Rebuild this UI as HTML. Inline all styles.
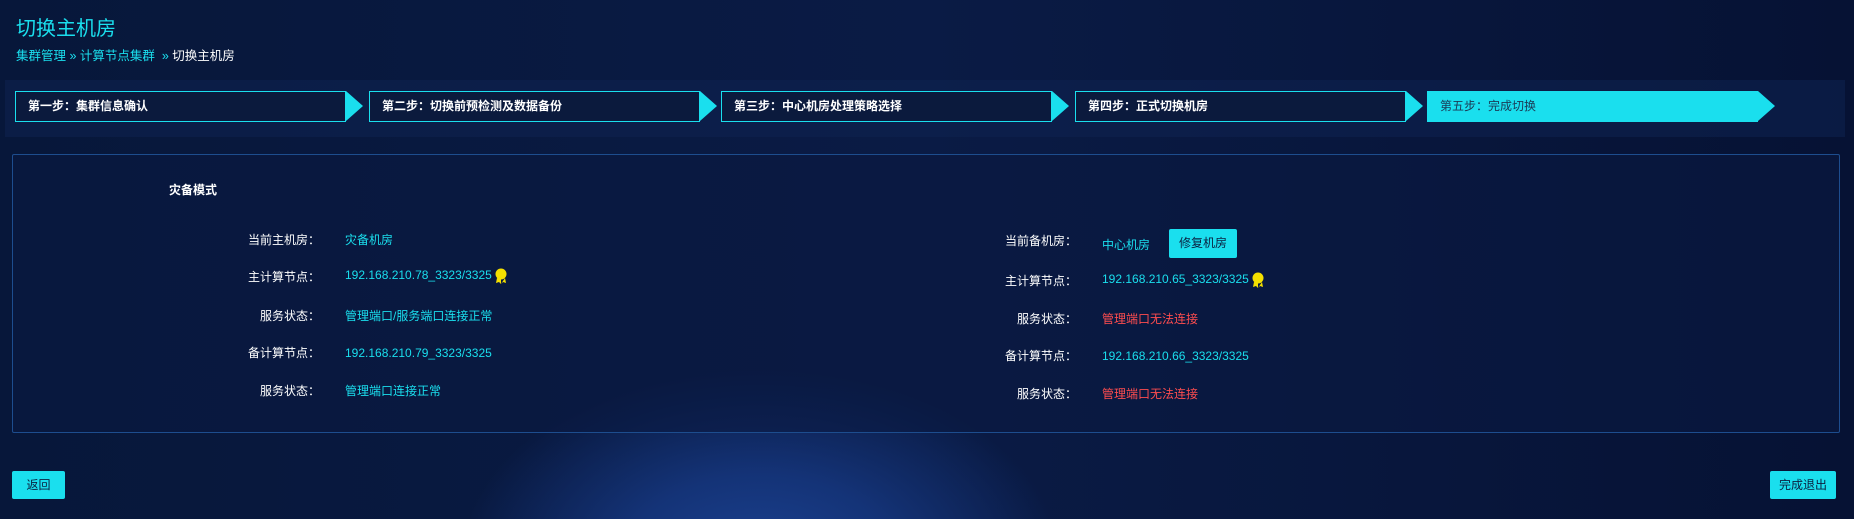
<!DOCTYPE html>
<html><head><meta charset="utf-8"><style>
*{margin:0;padding:0;box-sizing:border-box}
body{width:1854px;height:519px;overflow:hidden;position:relative;font-family:"Liberation Sans","Noto Sans CJK SC",sans-serif;font-size:12px;color:#fff;
background:radial-gradient(ellipse 300px 190px at 760px 560px,#1b4190 0%,#143377 45%,rgba(12,28,70,0) 100%),linear-gradient(90deg,#07173a 0%,#0a1b45 50%,#061234 100%);}
.a{position:absolute}
.title{left:16px;top:12px;font-size:20px;color:#1adfee}
.bc{left:16px;top:45px;font-size:12.5px;color:#1adfee}
.bc span{color:#fff}
.bar{left:5px;top:80px;width:1840px;height:57px;background:rgba(15,35,80,.55)}
.step{top:91px;height:31px;width:331px;border:1px solid #1adfee;background:#0b1a3d;font-weight:bold;font-size:12px;line-height:29px;padding-left:12px}
.arr{top:91px;width:0;height:0;border-top:15.5px solid transparent;border-bottom:15.5px solid transparent;border-left:17px solid #1adfee}
.panel{left:12px;top:154px;width:1828px;height:279px;border:1px solid #1d4d8e;border-radius:2px;background:rgba(10,25,65,.6)}
.lab{width:140px;text-align:right;font-size:12px}
.v{color:#1adfee;font-size:12px}
.r{color:#ff4d4f;font-size:12px}
.btn{background:#1adfee;color:#0b2040;font-size:12px;text-align:center;border-radius:2px}
.medal{display:inline-block;width:14px;height:16px;vertical-align:middle;margin-left:2px}
</style></head><body>
<div class="a title">切换主机房</div>
<div class="a bc">集群管理 » 计算节点集群 &nbsp;» <span>切换主机房</span></div>
<div class="a bar"></div>
<div class="a step" style="left:15px">第一步：集群信息确认</div><div class="a arr" style="left:346px"></div>
<div class="a step" style="left:369px">第二步：切换前预检测及数据备份</div><div class="a arr" style="left:700px"></div>
<div class="a step" style="left:721px">第三步：中心机房处理策略选择</div><div class="a arr" style="left:1052px"></div>
<div class="a step" style="left:1075px">第四步：正式切换机房</div><div class="a arr" style="left:1406px"></div>
<div class="a step" style="left:1427px;background:#1adfee;color:#1b3a55;font-weight:normal">第五步：完成切换</div><div class="a arr" style="left:1758px"></div>
<div class="a panel"></div>
<div class="a" style="left:169px;top:181px;font-weight:bold">灾备模式</div>

<div class="a lab" style="left:180px;top:231px">当前主机房：</div><div class="a v" style="left:345px;top:231px">灾备机房</div>
<div class="a lab" style="left:180px;top:268px">主计算节点：</div><div class="a v" style="left:345px;top:268px">192.168.210.78_3323/3325<svg class="medal" viewBox="0 0 14 16"><circle cx="7" cy="6" r="5.5" fill="#f5e000"/><path d="M3 10l-1 5 3-1 2 2 0-5M11 10l1 5-3-1-2 2" fill="#f5e000"/></svg></div>
<div class="a lab" style="left:180px;top:307px">服务状态：</div><div class="a v" style="left:345px;top:307px">管理端口/服务端口连接正常</div>
<div class="a lab" style="left:180px;top:344px">备计算节点：</div><div class="a v" style="left:345px;top:346px">192.168.210.79_3323/3325</div>
<div class="a lab" style="left:180px;top:382px">服务状态：</div><div class="a v" style="left:345px;top:382px">管理端口连接正常</div>

<div class="a lab" style="left:937px;top:232px">当前备机房：</div><div class="a v" style="left:1102px;top:236px">中心机房</div>
<div class="a btn" style="left:1169px;top:229px;width:68px;height:29px;line-height:29px">修复机房</div>
<div class="a lab" style="left:937px;top:272px">主计算节点：</div><div class="a v" style="left:1102px;top:272px">192.168.210.65_3323/3325<svg class="medal" viewBox="0 0 14 16"><circle cx="7" cy="6" r="5.5" fill="#f5e000"/><path d="M3 10l-1 5 3-1 2 2 0-5M11 10l1 5-3-1-2 2" fill="#f5e000"/></svg></div>
<div class="a lab" style="left:937px;top:310px">服务状态：</div><div class="a r" style="left:1102px;top:310px">管理端口无法连接</div>
<div class="a lab" style="left:937px;top:347px">备计算节点：</div><div class="a v" style="left:1102px;top:349px">192.168.210.66_3323/3325</div>
<div class="a lab" style="left:937px;top:385px">服务状态：</div><div class="a r" style="left:1102px;top:385px">管理端口无法连接</div>

<div class="a btn" style="left:12px;top:471px;width:53px;height:28px;line-height:28px">返回</div>
<div class="a btn" style="left:1770px;top:471px;width:66px;height:28px;line-height:28px">完成退出</div>
</body></html>
